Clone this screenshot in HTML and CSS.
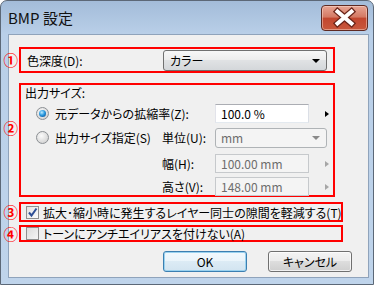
FILE: index.html
```html
<!DOCTYPE html>
<html lang="ja">
<head>
<meta charset="utf-8">
<title>BMP 設定</title>
<link rel="stylesheet" href="styles.css">
</head>
<body>
<div class="window">
  <div class="titlebar">
    <span class="title">BMP 設定</span>
    <div class="close">
      <svg width="45" height="24" viewBox="0 0 45 24">
        <path d="M15.5 5.5 L29.5 17.5 M29.5 5.5 L15.5 17.5" stroke="#6a2418" stroke-width="6.5" stroke-linecap="square" fill="none"/>
        <path d="M15.5 5.5 L29.5 17.5 M29.5 5.5 L15.5 17.5" stroke="#ffffff" stroke-width="4" stroke-linecap="square" fill="none"/>
      </svg>
    </div>
  </div>
  <div class="client">
    <div class="row row1">
      <span class="mark">①</span>
      <div class="box box1">
        <span class="text">色深度(D):</span>
        <div class="select"><span>カラー</span><i class="tri"></i></div>
      </div>
    </div>
    <div class="row row2">
      <span class="mark mark2">②</span>
      <div class="box box2">
        <div class="heading">出力サイズ:</div>
        <div class="grid">
          <div class="opt c12 r1"><i class="radio on"></i><span>元データからの拡縮率(Z):</span></div>
          <div class="field c3 r1">100.0 %</div>
          <div class="arrow c4 r1"><i class="rtri"></i></div>

          <div class="opt c1 r2"><i class="radio"></i><span>出力サイズ指定(S)</span></div>
          <div class="lbl c2 r2">単位(U):</div>
          <div class="select disabled small c34 r2"><span>mm</span><i class="tri"></i></div>

          <div class="lbl c2 r3">幅(H):</div>
          <div class="field disabled c3 r3">100.00 mm</div>
          <div class="arrow c4 r3"><i class="rtri dim"></i></div>

          <div class="lbl c2 r4">高さ(V):</div>
          <div class="field disabled c3 r4">148.00 mm</div>
          <div class="arrow c4 r4"><i class="rtri dim"></i></div>
        </div>
      </div>
    </div>
    <div class="row row3">
      <span class="mark">③</span>
      <div class="box box3">
        <span class="check on"><svg width="11" height="11" viewBox="0 0 11 11"><path d="M2 5.5 L4.5 8.5 L9.5 1.5" stroke="#2f4f95" stroke-width="2" fill="none"/></svg></span>
        <span class="text">拡大･縮小時に発生するレイヤー同士の隙間を軽減する(T)</span>
      </div>
    </div>
    <div class="row row4">
      <span class="mark">④</span>
      <div class="box box4">
        <span class="check"></span>
        <span class="text">トーンにアンチエイリアスを付けない(A)</span>
      </div>
    </div>
    <div class="buttons">
      <div class="btn default">OK</div>
      <div class="btn">キャンセル</div>
    </div>
  </div>
</div>
</body>
</html>
```
FILE: styles.css
```css
html, body {
  margin: 0;
  padding: 0;
  background: #ffffff;
}

.window {
  box-sizing: border-box;
  width: 374px;
  height: 285px;
  border: 1px solid #5c6877;
  border-radius: 7px 7px 0 0;
  background: linear-gradient(#a3bcd9, #b9cfe8 33px, #bfd4eb);
  padding: 0 4px 6px 7px;
  display: flex;
  flex-direction: column;
  font-family: "Noto Sans CJK JP", sans-serif;
  font-size: 12px;
  color: #000;
  font-feature-settings: "palt";
}

.titlebar {
  height: 33px;
  display: flex;
  align-items: flex-start;
  justify-content: space-between;
  flex: none;
}

.title {
  font-size: 15px;
  line-height: 18px;
  margin-top: 8px;
  color: #111;
}

.close {
  box-sizing: border-box;
  width: 47px;
  height: 26px;
  margin-top: 4px;
  margin-right: 1px;
  border: 1px solid #5e2a22;
  border-radius: 4px;
  background: linear-gradient(#e7a594, #d57a64 45%, #c2472f 52%, #c9583c);
  box-shadow: inset 0 0 0 1px rgba(255, 230, 220, 0.45);
  display: flex;
  align-items: center;
  justify-content: center;
}

.client {
  flex: 1;
  background: #f0f0f0;
  border: 1px solid #8fa3bb;
  display: flex;
  flex-direction: column;
  padding-top: 12px;
}

.row {
  display: flex;
  align-items: center;
}

.row2 { margin-top: 10px; align-items: flex-start; }
.row3 { margin-top: 5px; }
.row4 { margin-top: 3px; }

.mark {
  box-sizing: border-box;
  width: 10px;
  flex: none;
  display: flex;
  justify-content: flex-end;
  padding-right: 1px;
  color: #ff0000;
  font-size: 14.5px;
  line-height: 14px;
  font-weight: bold;
  white-space: nowrap;
}

.mark2 { margin-top: 38px; }

.box {
  box-sizing: border-box;
  border: 2px solid #ff0000;
}

.box1 {
  width: 316px;
  height: 26px;
  display: flex;
  align-items: center;
  justify-content: space-between;
  padding: 0 6px;
}

.box1 .select { align-self: flex-end; }

.select {
  box-sizing: border-box;
  width: 164px;
  height: 21px;
  border: 1px solid #707070;
  border-radius: 3px;
  background: linear-gradient(#f7f7f7, #ececec 50%, #e0e2e4 50%, #d4d7da);
  display: flex;
  align-items: center;
  justify-content: space-between;
  padding: 0 6px 0 6px;
  line-height: 16px;
}

.tri {
  width: 0;
  height: 0;
  border-left: 4px solid transparent;
  border-right: 4px solid transparent;
  border-top: 4px solid #000;
}

.select.disabled {
  border-color: #afb3b6;
  background: #f4f4f4;
  color: #6d6d6d;
  padding-left: 5px;
}

.select.disabled .tri { border-top-color: #8a8a8a; }

.select.small {
  width: 112px;
  height: 20px;
}

.box2 {
  width: 316px;
  height: 114px;
}

.heading {
  height: 19px;
  line-height: 16px;
  padding-left: 4px;
}

.grid {
  display: grid;
  grid-template-columns: 141px 53px 94px 24px;
  grid-template-rows: 24px 26px 23px 19px;
  align-items: start;
}

.c1 { grid-column: 1; }
.c2 { grid-column: 2; }
.c3 { grid-column: 3; }
.c4 { grid-column: 4; }
.c12 { grid-column: 1 / 3; }
.c34 { grid-column: 3 / 5; }
.r1 { grid-row: 1; }
.r2 { grid-row: 2; }
.r3 { grid-row: 3; }
.r4 { grid-row: 4; }

.opt {
  display: flex;
  align-items: center;
  gap: 6px;
  padding-left: 15px;
  height: 19px;
  white-space: nowrap;
}

.opt.r2 { height: 18px; }

.lbl {
  line-height: 19px;
  white-space: nowrap;
}

.lbl.r2 { line-height: 20px; }

.radio {
  box-sizing: border-box;
  width: 13px;
  height: 13px;
  border-radius: 50%;
  border: 1px solid #8b8f93;
  background: radial-gradient(circle at 40% 35%, #fbfbfb, #d8d8d8 70%, #c9c9c9);
  display: flex;
  align-items: center;
  justify-content: center;
  flex: none;
}

.radio.on::after {
  content: "";
  width: 7px;
  height: 7px;
  border-radius: 50%;
  background: radial-gradient(circle at 40% 35%, #bfeaff, #2a9be0 45%, #0c4f93 90%);
}

.field {
  box-sizing: border-box;
  height: 19px;
  border: 1px solid;
  border-color: #abadb3 #dbdfe6 #e3e9ef #e2e3ea;
  background: #ffffff;
  padding-left: 5px;
  line-height: 17px;
}

.field.disabled {
  background: #f4f4f4;
  border-color: #c6c9cc;
  color: #6d6d6d;
}

.arrow {
  height: 19px;
  display: flex;
  align-items: center;
  padding-left: 16px;
}

.rtri {
  width: 0;
  height: 0;
  border-top: 3.5px solid transparent;
  border-bottom: 3.5px solid transparent;
  border-left: 4px solid #000;
}

.rtri.dim { border-left-color: #a6a6a6; }

.box3, .box4 {
  width: 324px;
  display: flex;
  align-items: center;
  gap: 4px;
  padding-left: 5px;
  white-space: nowrap;
}

.box3 { height: 20px; }
.box4 { height: 17px; }

.check {
  box-sizing: border-box;
  width: 13px;
  height: 13px;
  border: 1px solid #8f8f8f;
  background: linear-gradient(135deg, #dcdcdc, #f6f6f6);
  display: flex;
  align-items: center;
  justify-content: center;
  flex: none;
}

.check.on {
  background: linear-gradient(135deg, #e3e3e3, #fbfbfb);
}

.buttons {
  margin-top: 9px;
  display: flex;
  justify-content: flex-end;
  gap: 21px;
  padding-right: 16px;
}

.btn {
  box-sizing: border-box;
  width: 84px;
  height: 21px;
  border: 1px solid #707070;
  border-radius: 3px;
  background: linear-gradient(#f4f4f4, #ebebeb 50%, #dddddd 50%, #cfcfcf);
  box-shadow: inset 0 0 0 1px rgba(255, 255, 255, 0.7);
  display: flex;
  align-items: center;
  justify-content: center;
  line-height: 16px;
}

.btn.default {
  border-color: #3c7fb1;
  background: linear-gradient(#f2f9fd, #eaf4fa 50%, #dcebf5 50%, #d2e4f0);
  box-shadow: inset 0 0 0 1px #9ad2ef;
}
```
